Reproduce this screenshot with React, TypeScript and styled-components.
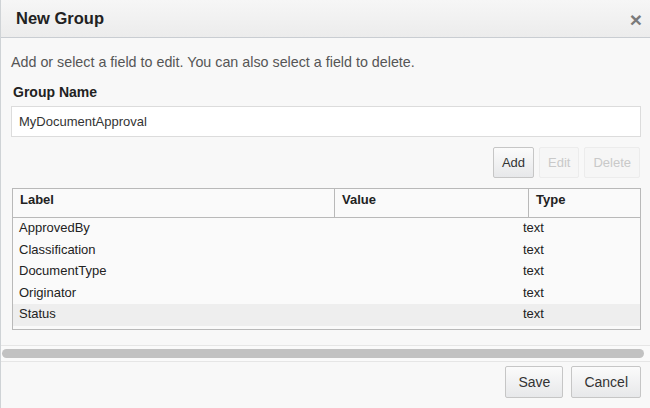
import React from 'react';
import styled, { createGlobalStyle } from 'styled-components';

const Global = createGlobalStyle`
  html, body {
    margin: 0;
    padding: 0;
    background: #f8f8f8;
  }
  body {
    font-family: 'Liberation Sans', Arial, sans-serif;
    font-size: 13px;
    color: #333;
  }
`;

const rows = [
  { label: 'ApprovedBy', type: 'text' },
  { label: 'Classification', type: 'text' },
  { label: 'DocumentType', type: 'text' },
  { label: 'Originator', type: 'text' },
  { label: 'Status', type: 'text', selected: true },
];

const App = () => {
  return (
    <>
      <Global />
      <Dialog>
        <Header>
          <Title>New Group</Title>
          <Close>×</Close>
        </Header>
        <Body>
          <Hint>Add or select a field to edit. You can also select a field to delete.</Hint>
          <FieldLabel>Group Name</FieldLabel>
          <Input defaultValue='MyDocumentApproval' />
          <Toolbar>
            <SmallButton>Add</SmallButton>
            <SmallButton disabled>Edit</SmallButton>
            <SmallButton disabled>Delete</SmallButton>
          </Toolbar>
          <Table>
            <HeadRow>
              <HeadCell>Label</HeadCell>
              <HeadCell>Value</HeadCell>
              <HeadCell last>Type</HeadCell>
            </HeadRow>
            <TableBody>
              {rows.map((r) => (
                <Row key={r.label} selected={r.selected}>
                  <Cell>{r.label}</Cell>
                  <Cell>{r.type}</Cell>
                </Row>
              ))}
            </TableBody>
          </Table>
        </Body>
        <ScrollArea>
          <Thumb />
        </ScrollArea>
        <Footer>
          <Button>Save</Button>
          <Button>Cancel</Button>
        </Footer>
      </Dialog>
    </>
  );
};

const Dialog = styled.div`
  width: 649px;
  height: 408px;
  border-left: 1px solid #cfd3d6;
  background: #f8f8f8;
  display: flex;
  flex-direction: column;
  overflow: hidden;
`;

const Header = styled.div`
  height: 37px;
  flex-shrink: 0;
  display: flex;
  align-items: center;
  justify-content: space-between;
  padding: 0 8px 0 15px;
  background: linear-gradient(#f6f6f6, #ececec);
  border-bottom: 1px solid #c9cdd2;
`;

const Title = styled.div`
  font-size: 16.5px;
  font-weight: bold;
  color: #222;
`;

const Close = styled.div`
  font-size: 21px;
  font-weight: bold;
  color: #7a7a7a;
  line-height: 1;
  margin-top: 1px;
`;

const Body = styled.div`
  padding: 16px 10px 0 10px;
  display: flex;
  flex-direction: column;
`;

const Hint = styled.div`
  color: #555;
  font-size: 14.3px;
  line-height: 16px;
`;

const FieldLabel = styled.div`
  margin-top: 14px;
  padding-left: 2px;
  font-weight: bold;
  font-size: 14px;
  line-height: 16px;
  color: #222;
`;

const Input = styled.input`
  margin-top: 6px;
  height: 31px;
  box-sizing: border-box;
  width: 630px;
  border: 1px solid #dcdcdc;
  background: #fff;
  padding: 0 7px;
  font-family: 'Liberation Sans', Arial, sans-serif;
  font-size: 13px;
  color: #333;
  outline: none;
`;

const Toolbar = styled.div`
  display: flex;
  justify-content: flex-end;
  gap: 5px;
  margin-top: 10px;
`;

const Button = styled.button`
  height: 32px;
  box-sizing: border-box;
  padding: 0 12px;
  font-family: 'Liberation Sans', Arial, sans-serif;
  font-size: 14px;
  color: #333;
  border: 1px solid #c6c6c6;
  border-radius: 2px;
  background: linear-gradient(#fbfbfb, #e7e8ea);
  &:disabled {
    color: #c9c9c9;
    border-color: #ececec;
    background: #f6f6f6;
  }
`;

const SmallButton = styled(Button)`
  height: 31px;
  padding: 0 8px;
  font-size: 13px;
`;

const Table = styled.div`
  margin-top: 10px;
  margin-left: 1px;
  width: 629px;
  display: flex;
  flex-direction: column;
`;

const HeadRow = styled.div`
  display: grid;
  grid-template-columns: 322px 194px 1fr;
  height: 29px;
  box-sizing: border-box;
  border: 1px solid #b9b9b9;
  border-bottom: none;
  background: #fafafa;
`;

const HeadCell = styled.div<{ last?: boolean }>`
  padding: 3px 7px 0;
  font-weight: bold;
  color: #222;
  border-right: ${(p) => (p.last ? 'none' : '1px solid #b9b9b9')};
`;

const TableBody = styled.div`
  border: 1px solid #b9b9b9;
  background: #fafafa;
  padding-bottom: 3px;
`;

const Row = styled.div<{ selected?: boolean }>`
  display: grid;
  grid-template-columns: 510px 1fr;
  height: 21.5px;
  line-height: 16px;
  align-items: start;
  padding-top: 0;
  background: ${(p) => (p.selected ? '#eeeeee' : 'transparent')};
`;

const Cell = styled.div`
  padding: 2px 0 0 6px;
  color: #222;
  &:last-child {
    padding-left: 0;
  }
`;

const ScrollArea = styled.div`
  margin-top: 15px;
  height: 15px;
  border-top: 1px solid #e6e6e6;
  border-bottom: 1px solid #e6e6e6;
  display: flex;
  align-items: center;
  padding: 0 6px 0 1px;
  background: #fafafa;
`;

const Thumb = styled.div`
  flex: 1;
  height: 9px;
  border-radius: 5px;
  background: #c2c2c2;
`;

const Footer = styled.div`
  display: flex;
  justify-content: flex-end;
  gap: 8px;
  padding: 4px 9px 0 0;
`;

export default App;
